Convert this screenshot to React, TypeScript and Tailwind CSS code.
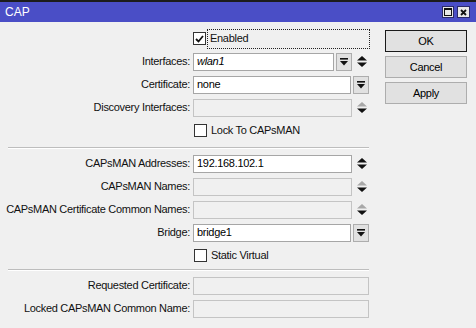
import type { ReactNode } from 'react';

const font = { fontFamily: '"Liberation Sans", Arial, sans-serif' };

function DropIcon() {
  return (
    <svg width="8" height="8" viewBox="0 0 8 8">
      <rect x="0" y="0" width="8" height="1.6" fill="#111" />
      <polygon points="0,3 8,3 4,7.5" fill="#111" />
    </svg>
  );
}

function DropButton() {
  return (
    <div className="ml-[2px] flex h-[18px] w-[16px] shrink-0 items-center justify-center border border-[#adadad] bg-[#e1e1e1]">
      <DropIcon />
    </div>
  );
}

function UpDown({ disabled = false }: { disabled?: boolean }) {
  return (
    <div className="flex w-[17px] shrink-0 items-center justify-center pl-[2px]">
      <svg width="10" height="11" viewBox="0 0 10 11">
        <polygon points="0,4.6 10,4.6 5,0" fill={disabled ? '#a8a8a8' : '#111'} />
        <polygon points="0,6.4 10,6.4 5,11" fill="#111" />
      </svg>
    </div>
  );
}

function Field({ value, italic = false, disabled = false }: { value?: string; italic?: boolean; disabled?: boolean }) {
  return (
    <div
      className={
        disabled
          ? 'h-[18px] min-w-0 flex-1 border border-[#c4c4c4] bg-[#f0f0f0]'
          : 'flex h-[18px] min-w-0 flex-1 items-center border border-[#a6a6a6] bg-white pl-[3px] leading-none text-black'
      }
    >
      {value && <span className={italic ? 'italic' : ''}>{value}</span>}
    </div>
  );
}

function Row({ label, children }: { label: string; children: ReactNode }) {
  return (
    <div className="flex h-[23px] items-center">
      <div className="w-[190px] shrink-0 text-right">{label}</div>
      <div className="ml-[3px] flex w-[176px] items-center">{children}</div>
    </div>
  );
}

function CheckBox({ checked = false }: { checked?: boolean }) {
  return (
    <div className="ml-[1px] flex h-[13px] w-[13px] shrink-0 items-center justify-center border border-[#333] bg-white">
      {checked && (
        <svg width="9" height="8" viewBox="0 0 9 8">
          <polyline points="1,4 3.5,6.5 8,1" fill="none" stroke="#111" strokeWidth="1.8" />
        </svg>
      )}
    </div>
  );
}

function CheckRow({ label }: { label: string }) {
  return (
    <div className="flex h-[23px] items-center">
      <div className="w-[190px] shrink-0" />
      <div className="ml-[3px] flex items-center">
        <CheckBox />
        <span className="ml-[4px]">{label}</span>
      </div>
    </div>
  );
}

function Separator() {
  return <div className="ml-[8px] w-[361px] border-t border-b border-t-[#bdbdbd] border-b-white" />;
}

function WinButton({ label, primary = false }: { label: string; primary?: boolean }) {
  return (
    <button
      className={
        primary
          ? 'flex h-[22px] w-[82px] items-center justify-center border border-[#1a1a1a] bg-[#e1e1e1] text-black'
          : 'flex h-[22px] w-[82px] items-center justify-center border border-[#adadad] bg-[#e1e1e1] text-black'
      }
    >
      {label}
    </button>
  );
}

export default function App() {
  return (
    <div style={font} className="h-[328px] w-[476px] overflow-hidden bg-[#f0f0f0] text-[11px] tracking-[-0.3px] text-[#111]">
      {/* Title bar */}
      <div className="border-t-2 border-[#1c1c1c]">
        <div className="flex h-[20px] items-center bg-[#4a4ec6] pl-[5px] pr-[6px]">
          <span className="text-[12px] tracking-normal text-white">CAP</span>
          <div className="ml-auto flex items-center gap-[3px]">
            <div className="flex h-[12px] w-[12px] items-center justify-center border border-[#2a2a6a] bg-[#e8e8e8]">
              <div className="h-[8px] w-[8px] border border-[#111] border-t-2" />
            </div>
            <div className="flex h-[12px] w-[13px] items-center justify-center border border-[#2a2a6a] bg-[#e8e8e8]">
              <svg width="7" height="7" viewBox="0 0 7 7">
                <path d="M1 1 L6 6 M6 1 L1 6" stroke="#111" strokeWidth="1.8" />
              </svg>
            </div>
          </div>
        </div>
      </div>

      <div className="flex pt-[5px]">
        {/* Form */}
        <div className="w-[372px] shrink-0">
          <div className="flex h-[23px] items-center">
            <div className="w-[190px] shrink-0" />
            <div className="ml-[2px] flex w-[178px] items-center">
              <CheckBox checked />
              <div className="ml-[1px] flex h-[20px] flex-1 items-center border border-dotted border-[#222] pl-[2px]">
                Enabled
              </div>
            </div>
          </div>
          <Row label="Interfaces:">
            <Field value="wlan1" italic />
            <DropButton />
            <UpDown />
          </Row>
          <Row label="Certificate:">
            <Field value="none" />
            <DropButton />
          </Row>
          <Row label="Discovery Interfaces:">
            <Field disabled />
            <UpDown disabled />
          </Row>
          <CheckRow label="Lock To CAPsMAN" />
          <div className="mb-[3px] mt-[5px]">
            <Separator />
          </div>
          <Row label="CAPsMAN Addresses:">
            <Field value="192.168.102.1" />
            <UpDown />
          </Row>
          <Row label="CAPsMAN Names:">
            <Field disabled />
            <UpDown disabled />
          </Row>
          <Row label="CAPsMAN Certificate Common Names:">
            <Field disabled />
            <UpDown disabled />
          </Row>
          <Row label="Bridge:">
            <Field value="bridge1" />
            <DropButton />
          </Row>
          <CheckRow label="Static Virtual" />
          <div className="mb-[3px] mt-[2px]">
            <Separator />
          </div>
          <Row label="Requested Certificate:">
            <Field disabled />
          </Row>
          <Row label="Locked CAPsMAN Common Name:">
            <Field disabled />
          </Row>
        </div>

        {/* Buttons */}
        <div className="ml-[13px] mt-[3px] flex flex-col gap-[4px]">
          <WinButton label="OK" primary />
          <WinButton label="Cancel" />
          <WinButton label="Apply" />
        </div>
      </div>
    </div>
  );
}
